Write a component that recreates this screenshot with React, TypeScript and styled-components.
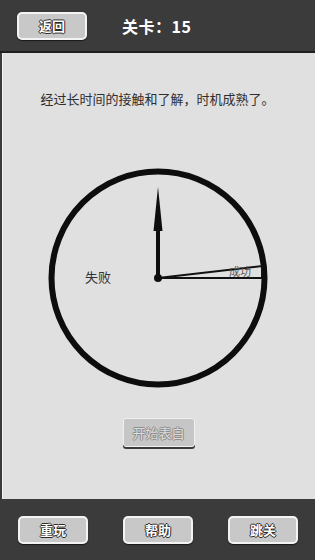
import React from "react";
import styled, { createGlobalStyle } from "styled-components";

const Global = createGlobalStyle`
  html, body { margin: 0; padding: 0; background: #3b3b3b; }
  body { font-family: "Noto Sans CJK SC", "Liberation Sans", sans-serif; }
`;

const Page = styled.div`
  width: 315px;
  height: 560px;
  display: flex;
  flex-direction: column;
  background: #3b3b3b;
  overflow: hidden;
`;

const Header = styled.header`
  height: 51px;
  border-bottom: 2px solid #1f1f1f;
  display: flex;
  align-items: center;
  padding-left: 17px;
  gap: 35px;
  box-sizing: content-box;
`;

const Title = styled.h1`
  margin: 0;
  color: #ffffff;
  font-size: 16px;
  font-weight: 700;
  letter-spacing: 0.5px;
  font-family: "Noto Sans CJK SC", "Liberation Sans", sans-serif;
`;

const Main = styled.main`
  flex: 1;
  margin-left: 2px;
  background: #e0e0e0;
  box-shadow: inset 1px 0 0 #f2f2f2;
  display: flex;
  flex-direction: column;
  align-items: center;
  padding-top: 37px;
`;

const Message = styled.p`
  margin: 0 0 0 -2px;
  font-size: 13px;
  line-height: 18px;
  color: #2e2e2e;
`;

const Dial = styled.svg`
  display: block;
  margin: 59px 0 0 -1px;
`;

const Footer = styled.footer`
  height: 61px;
  display: flex;
  align-items: center;
  justify-content: space-between;
  padding: 0 17px 0 18px;
`;

const GameButton = styled.button`
  width: 70px;
  height: 28px;
  padding: 0;
  box-sizing: border-box;
  background: #c8c8c8;
  border: 2px solid #f3f3f3;
  border-radius: 5px;
  box-shadow: 0 1px 1px #1a1a1a;
  font-family: "Noto Sans CJK SC", "Liberation Sans", sans-serif;
  font-size: 13px;
  font-weight: 700;
  color: #ffffff;
  text-shadow: -1px 0 #2a2a2a, 1px 0 #2a2a2a, 0 -1px #2a2a2a, 0 1px #2a2a2a;
  cursor: pointer;
`;

const StartButton = styled.button`
  margin-top: 29px;
  width: 72px;
  height: 29px;
  padding: 0;
  box-sizing: border-box;
  background: #c6c6c6;
  border: 1px solid #f0f0f0;
  border-radius: 3px;
  box-shadow: 0 2px 0 #3a3a3a;
  font-family: "Noto Sans CJK SC", "Liberation Sans", sans-serif;
  font-size: 13px;
  font-weight: 400;
  color: #dcdcdc;
  text-shadow: -1px 0 #8e8e8e, 1px 0 #8e8e8e, 0 -1px #8e8e8e, 0 1px #8e8e8e;
`;

export default function App() {
  return (
    <Page>
      <Global />
      <Header>
        <GameButton>返回</GameButton>
        <Title>关卡：15</Title>
      </Header>
      <Main>
        <Message>经过长时间的接触和了解，时机成熟了。</Message>
        <Dial width="222" height="222" viewBox="0 0 222 222">
          <circle cx="111" cy="111" r="106.5" fill="none" stroke="#0d0d0d" strokeWidth="6" />
          <polygon
            points="111,111 215,99 215,111"
            fill="none"
            stroke="#111"
            strokeWidth="2"
            strokeLinejoin="miter"
          />
          <text x="182" y="109" fontSize="11" fill="#555" fontFamily="Noto Sans CJK SC, sans-serif">
            成功
          </text>
          <text x="38" y="115" fontSize="13" fill="#333" fontFamily="Noto Sans CJK SC, sans-serif">
            失败
          </text>
          <rect x="109" y="62" width="4" height="49" fill="#0d0d0d" />
          <polygon points="111,20 106.5,64 115.5,64" fill="#0d0d0d" />
          <circle cx="111" cy="111" r="4" fill="#0d0d0d" />
        </Dial>
        <StartButton disabled>开始表白</StartButton>
      </Main>
      <Footer>
        <GameButton>重玩</GameButton>
        <GameButton>帮助</GameButton>
        <GameButton>跳关</GameButton>
      </Footer>
    </Page>
  );
}
